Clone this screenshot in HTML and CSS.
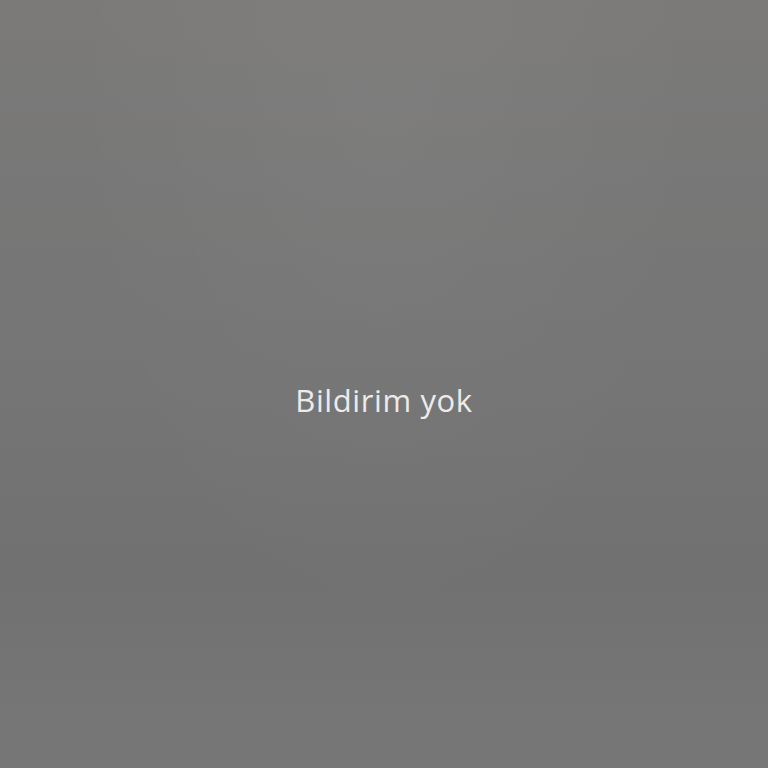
FILE: index.html
```html
<!DOCTYPE html>
<html lang="tr">
<head>
<meta charset="utf-8">
<link rel="stylesheet" href="styles.css">
</head>
<body>
<main class="screen">
  <p class="empty">Bildirim yok</p>
</main>
</body>
</html>
```
FILE: styles.css
```css
html, body {
  margin: 0;
  padding: 0;
  height: 100%;
}
.screen {
  width: 768px;
  height: 768px;
  display: flex;
  align-items: center;
  justify-content: center;
  background:
    radial-gradient(ellipse at 50% 10%, rgba(255,255,255,0.03), rgba(255,255,255,0) 60%),
    linear-gradient(180deg, #7b7a79 0%, #767676 40%, #727171 75%, #777777 100%);
}
.empty {
  margin: 0;
  padding-top: 32px;
  font-family: "Open Sans", "Noto Sans", sans-serif;
  font-size: 31px;
  letter-spacing: 0.6px;
  color: #ebebeb;
}
```
